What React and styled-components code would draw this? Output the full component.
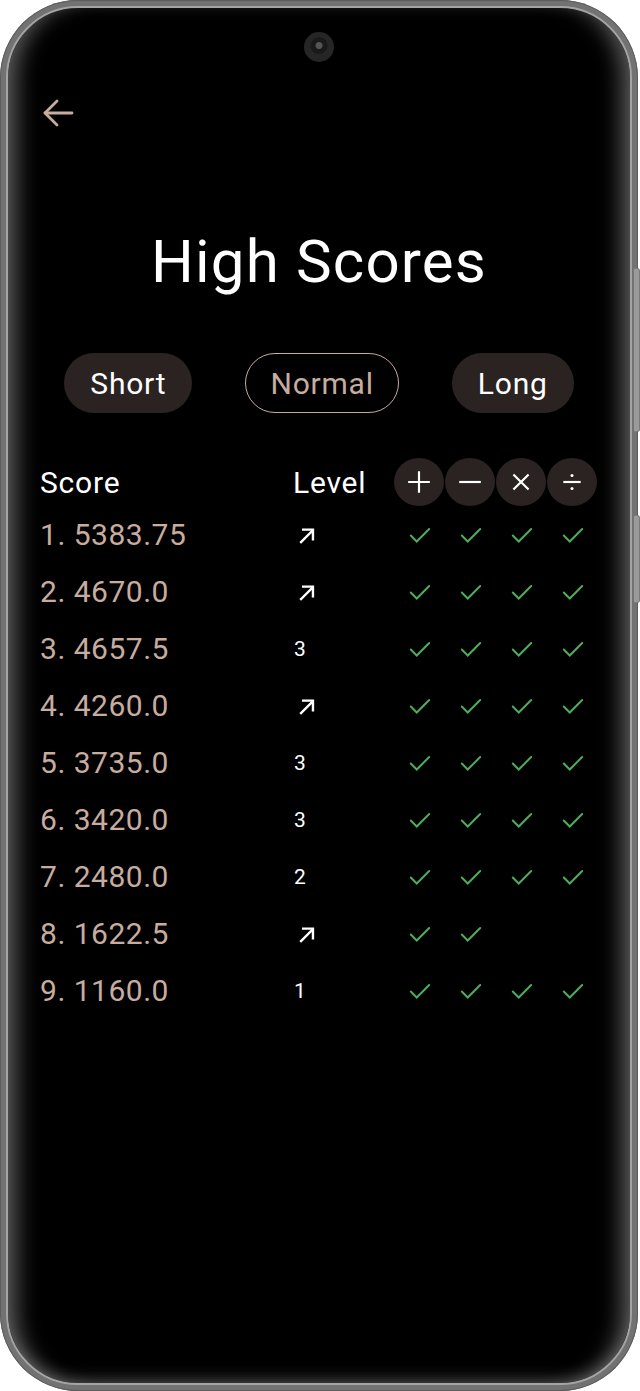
import styled, { createGlobalStyle } from 'styled-components';

const GlobalStyle = createGlobalStyle`
  html, body {
    margin: 0;
    padding: 0;
    background: #ffffff;
  }
  body {
    font-family: Roboto, "Noto Sans", "Liberation Sans", sans-serif;
  }
`;

const TAN = '#c7ac9f';
const PILL = '#2b2321';
const GREEN = '#4fae5c';

const Device = styled.div`
  position: relative;
  box-sizing: border-box;
  width: 638px;
  height: 1391px;
  padding: 6px;
  border-radius: 78px;
  background: #727272;
  box-shadow: inset 0 0 0 1px #5c5c5c;
`;

const SideKey = styled.div`
  position: absolute;
  right: -2px;
  top: ${(p) => p.top}px;
  width: 5px;
  height: ${(p) => p.h}px;
  border-radius: 0 3px 3px 0;
  background: #9a9a9a;
  border: 1px solid #7a7a7a;
  border-left: none;
`;

const Screen = styled.div`
  position: relative;
  box-sizing: border-box;
  height: 100%;
  border-radius: 72px;
  border: 2px solid #a4a4a4;
  background: #000;
  overflow: hidden;
  padding: 89px 0 0 32px;
  box-shadow:
    inset 22px 0 22px -14px rgba(170, 170, 170, 0.55),
    inset -22px 0 22px -14px rgba(170, 170, 170, 0.55),
    inset 0 -14px 18px -12px rgba(170, 170, 170, 0.4);
`;

const Camera = styled.div`
  position: absolute;
  top: 24px;
  left: 50%;
  margin-left: -15px;
  width: 30px;
  height: 30px;
  border-radius: 50%;
  background: radial-gradient(circle at 50% 45%, #555 0 3px, #1a1a1a 4px 8px, #262626 9px 15px);
`;

const BackButton = styled.button`
  display: block;
  width: 34px;
  height: 32px;
  padding: 0;
  margin-left: 1px;
  border: none;
  background: none;
  color: ${TAN};
`;

const Title = styled.h1`
  margin: 98px 32px 0 0;
  font-size: 60px;
  line-height: 70px;
  font-weight: 400;
  letter-spacing: 1.2px;
  color: #fff;
  text-align: center;
`;

const Pills = styled.div`
  display: flex;
  justify-content: center;
  gap: 53px;
  margin: 56px 32px 0 0;
`;

const Pill = styled.button`
  box-sizing: border-box;
  height: 60px;
  padding: 0 ${(p) => (p.active ? 24 : 26)}px;
  border-radius: 30px;
  border: ${(p) => (p.active ? `1.5px solid ${TAN}` : 'none')};
  background: ${(p) => (p.active ? 'transparent' : PILL)};
  color: ${(p) => (p.active ? TAN : '#fff')};
  font-family: Roboto, sans-serif;
  font-size: 30px;
  letter-spacing: 0.8px;
`;

const Table = styled.div`
  display: grid;
  grid-template-columns: 253px 101px repeat(4, 51px);
  grid-auto-rows: 57px;
  grid-template-rows: 48px;
  margin-top: 45px;
  align-items: center;
`;

const HeadLabel = styled.div`
  font-size: 30px;
  letter-spacing: 0.8px;
  color: #fff;
`;

const OpCircle = styled.div`
  width: 50px;
  height: 48px;
  border-radius: 50%;
  background: ${PILL};
  color: #fff;
  display: flex;
  align-items: center;
  justify-content: center;
`;

const ScoreCell = styled.div`
  font-size: 30px;
  color: ${TAN};
  letter-spacing: 0.5px;
`;

const LevelCell = styled.div`
  font-size: 21px;
  color: #fff;
  padding-left: 1px;
  display: flex;
  align-items: center;
`;

const CheckCell = styled.div`
  display: flex;
  justify-content: center;
  align-items: center;
`;

const ArrowIcon = () => (
  <svg width="26" height="26" viewBox="0 0 24 24" fill="none" stroke="#fff" strokeWidth="2.2" strokeLinecap="square">
    <path d="M6.5 18.5 L17 8" />
    <path d="M8.5 7 H17.5 V16" />
  </svg>
);

const Check = () => (
  <svg width="26" height="26" viewBox="0 0 24 24" fill="none" stroke={GREEN} strokeWidth="1.8" strokeLinecap="round">
    <path d="M3.5 12.5 L9 18 L20.5 6.5" />
  </svg>
);

const OpIcon = ({ op }) => (
  <svg width="26" height="26" viewBox="0 0 24 24" fill="none" stroke="#fff" strokeWidth="2" strokeLinecap="butt">
    {op === '+' && <path d="M2 12 H22 M12 2 V22" />}
    {op === '-' && <path d="M2 12 H22" />}
    {op === 'x' && <path d="M5 5 L19 19 M19 5 L5 19" />}
    {op === '/' && (
      <>
        <path d="M4 12 H20" />
        <circle cx="12" cy="6" r="1.4" fill="#fff" stroke="none" />
        <circle cx="12" cy="18" r="1.4" fill="#fff" stroke="none" />
      </>
    )}
  </svg>
);

const scores = [
  { score: '5383.75', level: 'up', done: 4 },
  { score: '4670.0', level: 'up', done: 4 },
  { score: '4657.5', level: '3', done: 4 },
  { score: '4260.0', level: 'up', done: 4 },
  { score: '3735.0', level: '3', done: 4 },
  { score: '3420.0', level: '3', done: 4 },
  { score: '2480.0', level: '2', done: 4 },
  { score: '1622.5', level: 'up', done: 2 },
  { score: '1160.0', level: '1', done: 4 },
];

const App = () => {
  return (
    <>
      <GlobalStyle />
      <Device>
        <SideKey top={268} h={162} />
        <SideKey top={515} h={86} />
        <Screen>
          <Camera />
          <BackButton aria-label="Back">
            <svg width="34" height="32" viewBox="0 0 34 32" fill="none" stroke="currentColor" strokeWidth="2.8" strokeLinecap="round" strokeLinejoin="round">
              <path d="M31 16 H4" />
              <path d="M16 4 L4 16 L16 28" />
            </svg>
          </BackButton>
          <Title>High Scores</Title>
          <Pills>
            <Pill>Short</Pill>
            <Pill active>Normal</Pill>
            <Pill>Long</Pill>
          </Pills>
          <Table>
            <HeadLabel>Score</HeadLabel>
            <HeadLabel>Level</HeadLabel>
            {['+', '-', 'x', '/'].map((op) => (
              <OpCircle key={op}>
                <OpIcon op={op} />
              </OpCircle>
            ))}
            {scores.map((row, i) => (
              <Row key={i} index={i + 1} row={row} />
            ))}
          </Table>
        </Screen>
      </Device>
    </>
  );
};

const Row = ({ index, row }) => (
  <>
    <ScoreCell>
      {index}. {row.score}
    </ScoreCell>
    <LevelCell>{row.level === 'up' ? <ArrowIcon /> : row.level}</LevelCell>
    {[0, 1, 2, 3].map((k) => (
      <CheckCell key={k}>{k < row.done ? <Check /> : null}</CheckCell>
    ))}
  </>
);

export default App;
